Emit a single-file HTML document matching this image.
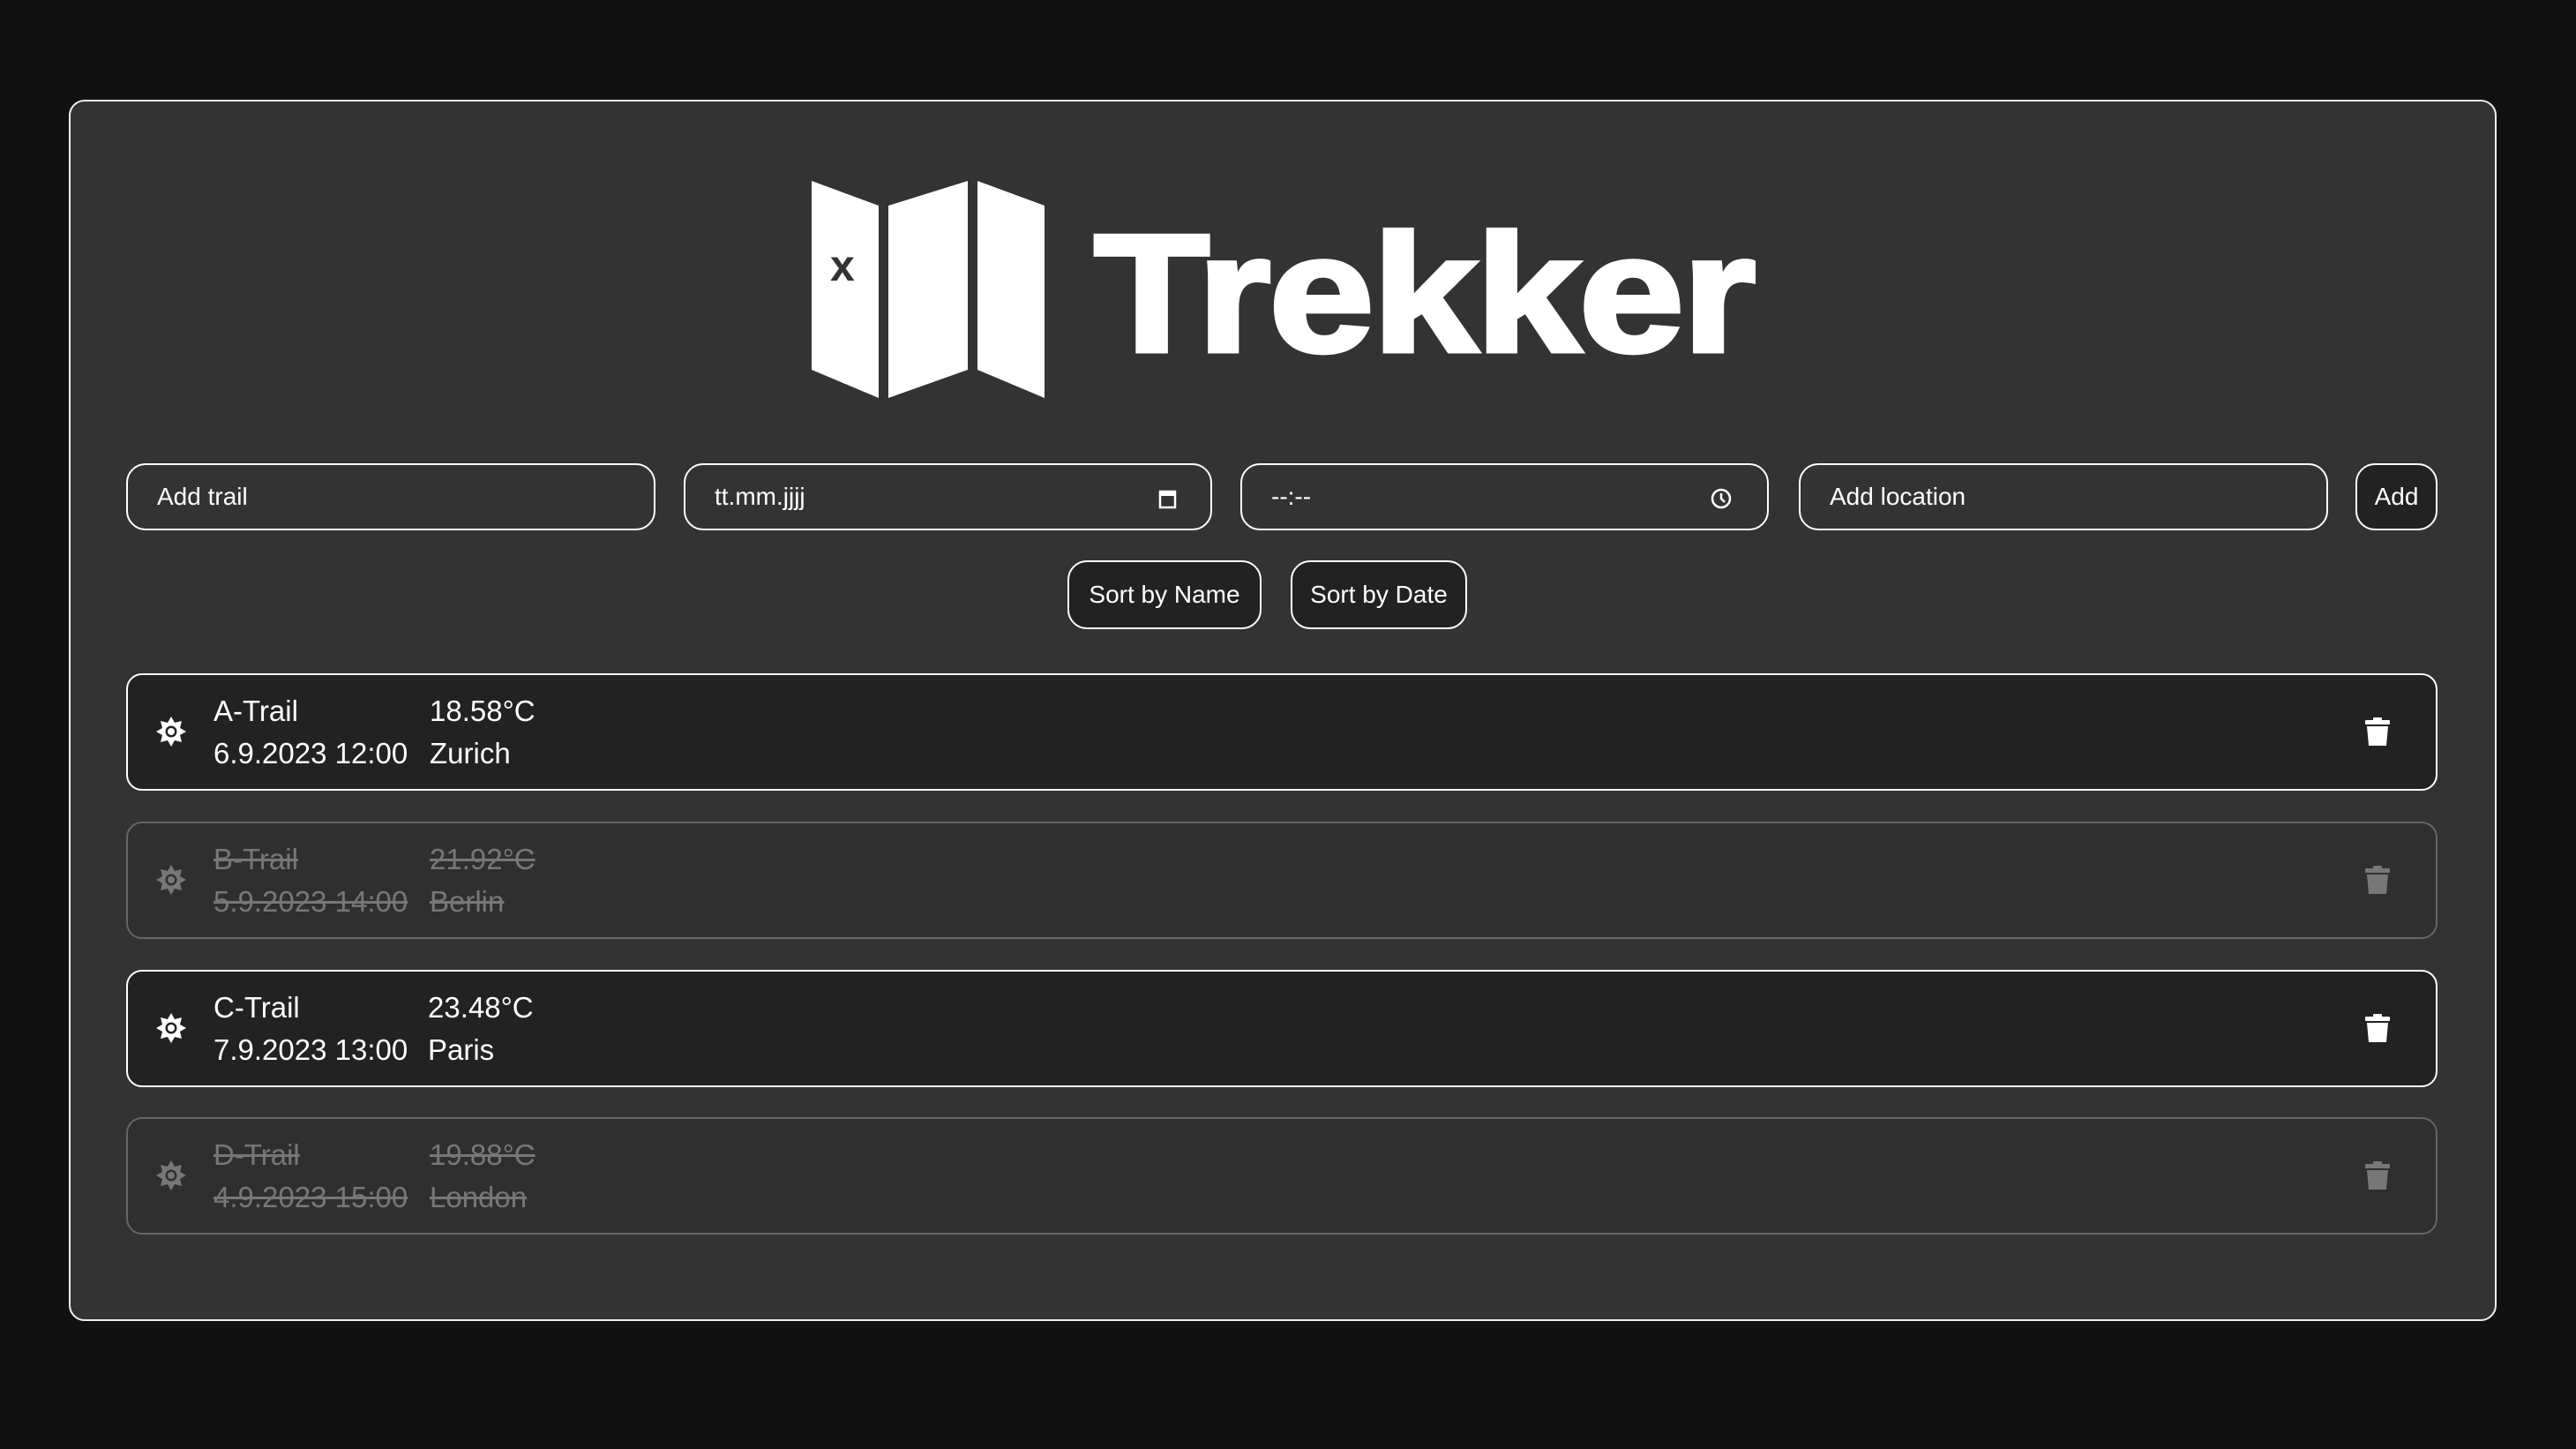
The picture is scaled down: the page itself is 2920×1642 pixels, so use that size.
<!DOCTYPE html>
<html><head><meta charset="utf-8"><style>
*{box-sizing:border-box;margin:0;padding:0}
body{width:2920px;height:1642px;background:#111;font-family:"Liberation Sans",sans-serif;color:#fff;position:relative;overflow:hidden}
.panel{position:absolute;left:78px;top:113px;width:2752px;height:1384px;background:#333;border:2px solid #eee;border-radius:18px}
.a{position:absolute}
.inp{position:absolute;top:525px;height:76px;border:2px solid #fff;border-radius:22px;background:#333;font-size:28px;line-height:72px;padding-left:33px}
.btn{position:absolute;border:2px solid #fff;border-radius:22px;background:#222;font-size:28px;text-align:center}
.row{position:absolute;left:143px;width:2620px;height:133px;border:2px solid #fff;border-radius:18px;background:#222;font-size:33px}
.row.done{border-color:#666;background:#2f2f2f;color:#777}
.row.done .t{text-decoration:line-through}
.t{position:absolute;line-height:48px;white-space:nowrap}
.sun{position:absolute;left:31px;top:46px}
.trash{position:absolute;left:2535px;top:48px}
</style></head><body>
<div class="panel"></div>
<svg class="a" style="left:0;top:0" width="2920" height="500">
<polygon points="920,205 996,233 996,451 920,419" fill="#fff"/>
<polygon points="1007,233 1097,205 1097,419 1007,451" fill="#fff"/>
<polygon points="1108,205 1184,233 1184,451 1108,419" fill="#fff"/>
<text x="941" y="318" font-family="Liberation Sans" font-weight="bold" font-size="50" fill="#333">x</text>
</svg>
<div class="a" style="left:1240px;top:223px;font-size:190px;font-weight:bold;line-height:220px;letter-spacing:-2px;transform:scaleX(1.13);transform-origin:left;-webkit-text-stroke:5px #fff">Trekker</div>
<div class="inp" style="left:143px;width:600px">Add trail</div>
<div class="inp" style="left:775px;width:599px">tt.mm.jjjj<svg class="a" style="left:536px;top:26px" width="22" height="24"><rect x="2" y="4" width="17" height="18" fill="none" stroke="#fff" stroke-width="2.5"/><rect x="2" y="4" width="17" height="5" fill="#fff"/></svg></div>
<div class="inp" style="left:1406px;width:599px">--:--<svg class="a" style="left:530px;top:25px" width="26" height="26"><circle cx="13" cy="13" r="10" fill="none" stroke="#fff" stroke-width="2.5"/><path d="M13 7v6l4 4" stroke="#fff" stroke-width="2.5" fill="none"/></svg></div>
<div class="inp" style="left:2039px;width:600px">Add location</div>
<div class="btn" style="left:2670px;top:525px;width:93px;height:76px;line-height:72px">Add</div>
<div class="btn" style="left:1210px;top:635px;width:220px;height:78px;line-height:74px">Sort by Name</div>
<div class="btn" style="left:1463px;top:635px;width:200px;height:78px;line-height:74px">Sort by Date</div>

<div class="row" style="top:763px"><svg class="sun" width="36" height="36" viewBox="-18 -18 36 36"><polygon fill="currentColor" points="0,-17 4,-10 12,-12 10,-4 17,0 10,4 12,12 4,10 0,17 -4,10 -12,12 -10,4 -17,0 -10,-4 -12,-12 -4,-10"/><circle r="6.5" fill="#222"/><circle r="4" fill="currentColor"/></svg>
<div class="t" style="left:97px;top:17px">A-Trail</div><div class="t" style="left:342px;top:17px">18.58°C</div>
<div class="t" style="left:97px;top:65px">6.9.2023 12:00</div><div class="t" style="left:342px;top:65px">Zurich</div>
<svg class="trash" width="30" height="34" viewBox="0 0 30 34"><rect x="1" y="3" width="28" height="5" rx="1" fill="currentColor"/><rect x="10" y="0" width="10" height="4" rx="1" fill="currentColor"/><path d="M3 10h24l-2 22H5z" fill="currentColor"/></svg></div>

<div class="row done" style="top:931px"><svg class="sun" width="36" height="36" viewBox="-18 -18 36 36"><polygon fill="currentColor" points="0,-17 4,-10 12,-12 10,-4 17,0 10,4 12,12 4,10 0,17 -4,10 -12,12 -10,4 -17,0 -10,-4 -12,-12 -4,-10"/><circle r="6.5" fill="#2f2f2f"/><circle r="4" fill="currentColor"/></svg>
<div class="t" style="left:97px;top:17px">B-Trail</div><div class="t" style="left:342px;top:17px">21.92°C</div>
<div class="t" style="left:97px;top:65px">5.9.2023 14:00</div><div class="t" style="left:342px;top:65px">Berlin</div>
<svg class="trash" width="30" height="34" viewBox="0 0 30 34"><rect x="1" y="3" width="28" height="5" rx="1" fill="currentColor"/><rect x="10" y="0" width="10" height="4" rx="1" fill="currentColor"/><path d="M3 10h24l-2 22H5z" fill="currentColor"/></svg></div>

<div class="row" style="top:1099px"><svg class="sun" width="36" height="36" viewBox="-18 -18 36 36"><polygon fill="currentColor" points="0,-17 4,-10 12,-12 10,-4 17,0 10,4 12,12 4,10 0,17 -4,10 -12,12 -10,4 -17,0 -10,-4 -12,-12 -4,-10"/><circle r="6.5" fill="#222"/><circle r="4" fill="currentColor"/></svg>
<div class="t" style="left:97px;top:17px">C-Trail</div><div class="t" style="left:340px;top:17px">23.48°C</div>
<div class="t" style="left:97px;top:65px">7.9.2023 13:00</div><div class="t" style="left:340px;top:65px">Paris</div>
<svg class="trash" width="30" height="34" viewBox="0 0 30 34"><rect x="1" y="3" width="28" height="5" rx="1" fill="currentColor"/><rect x="10" y="0" width="10" height="4" rx="1" fill="currentColor"/><path d="M3 10h24l-2 22H5z" fill="currentColor"/></svg></div>

<div class="row done" style="top:1266px"><svg class="sun" width="36" height="36" viewBox="-18 -18 36 36"><polygon fill="currentColor" points="0,-17 4,-10 12,-12 10,-4 17,0 10,4 12,12 4,10 0,17 -4,10 -12,12 -10,4 -17,0 -10,-4 -12,-12 -4,-10"/><circle r="6.5" fill="#2f2f2f"/><circle r="4" fill="currentColor"/></svg>
<div class="t" style="left:97px;top:17px">D-Trail</div><div class="t" style="left:342px;top:17px">19.88°C</div>
<div class="t" style="left:97px;top:65px">4.9.2023 15:00</div><div class="t" style="left:342px;top:65px">London</div>
<svg class="trash" width="30" height="34" viewBox="0 0 30 34"><rect x="1" y="3" width="28" height="5" rx="1" fill="currentColor"/><rect x="10" y="0" width="10" height="4" rx="1" fill="currentColor"/><path d="M3 10h24l-2 22H5z" fill="currentColor"/></svg></div>
</body></html>
